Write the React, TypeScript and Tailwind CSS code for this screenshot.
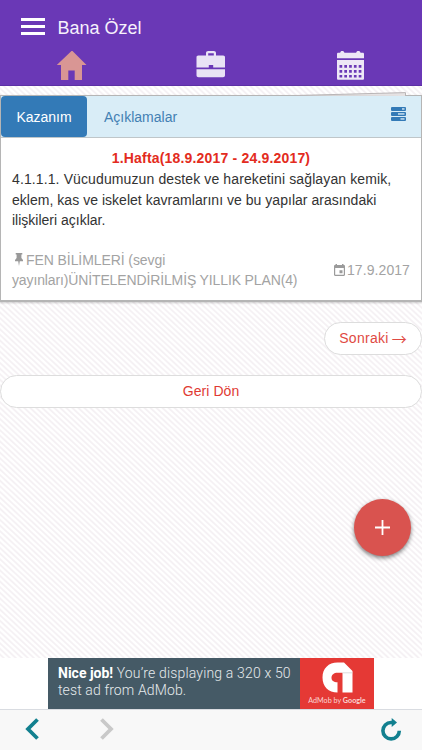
import React from "react";

const stripes =
  "bg-[repeating-linear-gradient(43deg,#ffffff_0px,#ffffff_1.2px,#f5f1f4_2.2px,#f5f1f4_3px,#ffffff_4.1px)]";

function Header() {
  return (
    <header className="flex h-[86px] shrink-0 flex-col border-b border-[#5c30a5] bg-[#6a38b6]">
      <div className="flex h-[51px] items-center pl-[21px] pt-[2px]">
        <div className="flex w-[24px] flex-col gap-[4.5px]">
          <span className="h-[2.5px] bg-white" />
          <span className="h-[2.5px] bg-white" />
          <span className="h-[2.5px] bg-white" />
        </div>
        <h1 className="pl-[12.5px] pt-[2px] text-[18px] leading-[24px] text-[#f6f1fc]">Bana Özel</h1>
      </div>
      <nav className="grid h-[30px] grid-cols-3">
        <svg className="ml-[56px]" width="32" height="30" viewBox="0 0 32 30" fill="#d99694">
          <path d="M16-.5 30.5 14H26v15h-7.3v-9.5h-6.4V29H5V14H.8z" />
        </svg>
        <svg className="ml-[55.5px]" width="30" height="30" viewBox="0 0 30 30" fill="#e9e3f5">
          <path
            fillRule="evenodd"
            d="M10 4.5V2.2C10 .8 10.8 0 12.2 0h5.6C19.2 0 20 .8 20 2.2v2.3h7.2c1.100 0 1.800.8 1.800 1.800V16.500H17.200V14h-4.400v2.500H.5V6.300C.5 5.300 1.200 4.500 2.300 4.500zM12.200 4.500h5.600V2.200h-5.600z"
          />
          <path d="M.5 18.300h28.500v6c0 1.200-.8 2-2 2h-24.500c-1.200 0-2-.8-2-2z" />
        </svg>
        <svg className="ml-[55.500px]" width="28" height="30" viewBox="0 0 28 30" fill="#ede7f6">
          <path d="M0 3c0-.8.6-1.300 1.300-1.300h1.900C3.300.6 4 0 5.200 0s2 .6 2.200 1.700h11.800C19.400.6 20 0 21.300 0s2 .6 2.200 1.700h2.200c.8 0 1.300.5 1.300 1.300v4.200H0z" />
          <path
            fillRule="evenodd"
            d="M0 9h27v18.500c0 .8-.5 1.300-1.300 1.300H1.300C.5 28.800 0 28.300 0 27.500zM2.500 14v2.700h2.700V14zM7.300 14v2.700H10V14zM12.100 14v2.700h2.700V14zM16.900 14v2.700h2.700V14zM21.700 14v2.700h2.700V14zM2.500 19v2.700h2.700V19zM7.300 19v2.700H10V19zM12.100 19v2.700h2.700V19zM16.900 19v2.700h2.700V19zM21.700 19v2.700h2.700V19zM2.500 24v2.500h2.700V24zM7.300 24v2.500H10V24zM12.100 24v2.500h2.700V24zM16.900 24v2.500h2.700V24zM21.700 24v2.500h2.700V24z"
          />
        </svg>
      </nav>
    </header>
  );
}

function PlanCard() {
  return (
    <section className="relative mt-[9px] flex h-[207px] shrink-0 flex-col border border-b-2 border-[#b5b5b5] bg-white shadow-[0_1px_2px_rgba(0,0,0,0.2)]">
      <svg className="absolute -top-[4px] right-[15px]" width="110" height="4" viewBox="0 0 110 4">
        <path d="M0 3.500 109.500.6V4" fill="#e5e2e3" stroke="#b9b5b6" strokeWidth="1" />
      </svg>
      <div className="flex h-[42px] items-start border-b border-[#bfc6c9] bg-[#d9edf7] text-[14px] leading-[20px]">
        <button className="h-[41px] w-[86px] rounded-[4px] bg-[#337ab7] text-white">Kazanım</button>
        <button className="h-[41px] pl-[17px] text-[#4380b3]">Açıklamalar</button>
        <svg className="ml-auto mr-[15px] mt-[11px]" width="15" height="14" viewBox="0 0 15 14">
          <g fill="#337ab7">
            <rect width="15" height="4" rx="1" />
            <rect y="5" width="15" height="4" rx="1" />
            <rect y="10" width="15" height="4" rx="1" />
          </g>
          <g fill="#c9e0ef">
            <rect x="11" y="1.200" width="2.500" height="1.500" />
            <rect x="7" y="6.200" width="6.500" height="1.500" />
            <rect x="9.500" y="11.200" width="4" height="1.500" />
          </g>
        </svg>
      </div>
      <div className="px-[11px] pt-[10px]">
        <h2 className="text-center text-[14px] font-bold leading-[21px] tracking-[0.18px] text-[#e32b20]">
          1.Hafta(18.9.2017 - 24.9.2017)
        </h2>
        <p className="whitespace-nowrap text-[14px] leading-[20.500px] text-[#333333]">
          <span className="tracking-[0.115px]">4.1.1.1. Vücudumuzun destek ve hareketini sağlayan kemik,</span>
          <br />
          <span className="tracking-[0.03px]">eklem, kas ve iskelet kavramlarını ve bu yapılar arasındaki</span>
          <br />
          ilişkileri açıklar.
        </p>
        <div className="mt-[19px] flex items-center justify-between whitespace-nowrap text-[14px] leading-[20.500px] text-[#a3a3a3]">
          <p className="tracking-[-0.13px]">
            <svg className="ml-[3px] mr-[3px] inline-block align-[-1px]" width="8" height="13" viewBox="0 0 8 13" fill="#999999">
              <path d="M.7 0h6.600v1.500H6.400V5L8 7v1.200H4.800L4 13l-.8-4.800H0V7l1.600-2V1.500H.7z" />
            </svg>
            <span className="tracking-[-0.08px]">FEN BİLİMLERİ (sevgi</span>
            <br />
            yayınları)ÜNİTELENDİRİLMİŞ YILLIK PLAN(4)
          </p>
          <p className="flex items-center gap-[2px]">
            <svg width="11" height="12" viewBox="0 0 11 12" fill="#9b9b9b">
              <path
                fillRule="evenodd"
                d="M1.500 0H3v1h5V0h1.500v1h.3c.7 0 1.200.5 1.200 1.200v8.600c0 .7-.5 1.200-1.200 1.200H1.200C.5 12 0 11.500 0 10.800V2.200C0 1.500.5 1 1.200 1h.3zM1.200 4v6.800h8.600V4zM5.500 6.300h3v3h-3z"
              />
            </svg>
            <span className="tracking-[0.08px]">17.9.2017</span>
          </p>
        </div>
      </div>
    </section>
  );
}

function AdBanner() {
  return (
    <div className="flex h-[51px] shrink-0 justify-center bg-white">
      <div className="flex h-[51px] w-[326px]">
        <p className="w-[252px] whitespace-nowrap bg-[#455a66] pl-[10px] pt-[7px] font-[Roboto,sans-serif] text-[14px] font-light leading-[17px] text-[#e5eaed]">
          <b className="font-bold text-white">Nice job!</b>
          <span className="tracking-[0.16px]"> You’re displaying a 320 x 50</span>
          <br />
          <span className="tracking-[0.12px]">test ad from AdMob.</span>
        </p>
        <div className="flex w-[74px] flex-col items-center bg-[#e53935] pt-[4px]">
          <svg width="31" height="31" viewBox="0 0 31 31">
            <path
              fill="#ffffff"
              d="M15.500.5H22L30.500 9v21.500H20.500V10.800h-5c-3.600 0-6 2-6 5 0 2.800 2 4.500 6 4.500v10.200C6.500 30.500.5 24.500.5 15.500S6.500.5 15.500.5z"
            />
            <path d="M20.500 10.800h10" stroke="#d4d4d4" strokeWidth=".8" />
          </svg>
          <span className="whitespace-nowrap font-[Lato,sans-serif] text-[7.200px] leading-[15px] text-[#fbd5d4]">
            AdMob by <span className="font-bold">Google</span>
          </span>
        </div>
      </div>
    </div>
  );
}

function BrowserBar() {
  return (
    <footer className="flex h-[41px] shrink-0 items-center border-t border-[#d9dce1] bg-[#f8f8f8] pb-[2px] pl-[25px] pr-[20px]">
      <svg width="14" height="22" viewBox="0 0 14 22" fill="none" stroke="#12808f" strokeWidth="3.800">
        <path d="M12.500 1.500 3 11l9.500 9.500" />
      </svg>
      <svg className="ml-[61px]" width="14" height="22" viewBox="0 0 14 22" fill="none" stroke="#c9c9c9" strokeWidth="3.800">
        <path d="M1.500 1.500 11 11l-9.500 9.500" />
      </svg>
      <svg className="ml-auto" width="22" height="23" viewBox="0 0 22 23">
        <path d="M14.500 4.500H11a8.200 8.200 0 1 0 8.300 8.200" fill="none" stroke="#12808f" strokeWidth="3.600" />
        <path d="M11.700 0 17 4.500 11.700 9z" fill="#12808f" />
      </svg>
    </footer>
  );
}

export default function App() {
  return (
    <div className="relative flex h-[750px] w-[422px] flex-col overflow-hidden bg-white font-['Liberation_Sans',Arial,sans-serif]">
      <Header />
      <main className={`flex min-h-0 flex-1 flex-col ${stripes}`}>
        <PlanCard />
        <button className="mt-[20px] flex h-[33px] w-[98px] shrink-0 items-center justify-center gap-[3px] self-end whitespace-nowrap rounded-full border border-[#dddddd] bg-white text-[14px] text-[#df4a43]">
          <span className="tracking-[0.3px]">Sonraki</span>
          <span className="font-['Noto_Sans_CJK_JP','DejaVu_Sans',sans-serif] text-[15px] leading-[16px]">→</span>
        </button>
        <button className="mt-[20px] h-[33px] w-full shrink-0 rounded-full border border-[#dddddd] bg-white text-[14px] tracking-[0.08px] text-[#df3a33]">
          Geri Dön
        </button>
      </main>
      <AdBanner />
      <BrowserBar />
      <button className="absolute left-[354px] top-[499px] flex size-[57px] items-center justify-center rounded-full bg-[#d9534f] shadow-[0_2px_4px_rgba(0,0,0,0.5)]">
        <svg width="15" height="15" viewBox="0 0 15 15" stroke="#ffffff" strokeWidth="1.800">
          <path d="M7.500 0v15M0 7.500h15" />
        </svg>
      </button>
    </div>
  );
}
